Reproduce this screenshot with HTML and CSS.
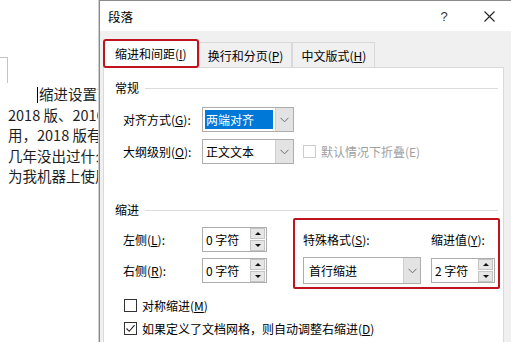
FILE: index.html
```html
<!DOCTYPE html>
<html lang="zh-CN">
<head>
<meta charset="utf-8">
<title>段落</title>
<link rel="stylesheet" href="styles.css">
</head>
<body>
<div class="screen">
  <div class="doc">
    <div class="corner"></div>
    <div class="para">
      <div class="line first"><span class="caret"></span>缩进设置首行缩进的方法</div>
      <div class="line">2018 版、2016 版、2013 版</div>
      <div class="line">用，2018 版有了一些新功能</div>
      <div class="line">几年没出过什么大的更新</div>
      <div class="line">为我机器上使用的是这个</div>
    </div>
  </div>
  <div class="dialog">
    <div class="titlebar">
      <span class="title">段落</span>
      <span class="tbtn help">?</span>
      <span class="tbtn close"><svg width="11" height="11" viewBox="0 0 11 11"><path d="M0.5 0.5 L10.5 10.5 M10.5 0.5 L0.5 10.5" stroke="#222" stroke-width="1.1" fill="none"/></svg></span>
    </div>
    <div class="dbody">
      <div class="tabs">
        <div class="tab active">缩进和间距(<u>I</u>)</div>
        <div class="tab">换行和分页(<u>P</u>)</div>
        <div class="tab">中文版式(<u>H</u>)</div>
      </div>
      <div class="panel">
        <div class="section-head"><span>常规</span><i class="rule"></i></div>
        <div class="frow">
          <span class="flabel">对齐方式(<u>G</u>):</span>
          <div class="select align">
            <span class="val"><span class="hl">两端对齐</span></span>
            <span class="drop"><svg width="9" height="6" viewBox="0 0 9 6"><path d="M0.5 0.8 L4.5 4.8 L8.5 0.8" stroke="#6d6d6d" fill="none"/></svg></span>
          </div>
        </div>
        <div class="frow second">
          <span class="flabel">大纲级别(<u>O</u>):</span>
          <div class="select align">
            <span class="val plain">正文文本</span>
            <span class="drop"><svg width="9" height="6" viewBox="0 0 9 6"><path d="M0.5 0.8 L4.5 4.8 L8.5 0.8" stroke="#6d6d6d" fill="none"/></svg></span>
          </div>
          <span class="check disabled"><span class="box"></span>默认情况下折叠(E)</span>
        </div>

        <div class="section-head indent-head"><span>缩进</span><i class="rule"></i></div>
        <div class="indent">
          <div class="leftcol">
            <div class="frow">
              <span class="flabel">左侧(<u>L</u>):</span>
              <div class="spin">
                <span class="val plain">0 字符</span>
                <span class="arrows"><span class="up"></span><span class="down"></span></span>
              </div>
            </div>
            <div class="frow">
              <span class="flabel">右侧(<u>R</u>):</span>
              <div class="spin">
                <span class="val plain">0 字符</span>
                <span class="arrows"><span class="up"></span><span class="down"></span></span>
              </div>
            </div>
          </div>
          <div class="special">
            <span class="slabel">特殊格式(<u>S</u>):</span>
            <span class="slabel">缩进值(<u>Y</u>):</span>
            <div class="select special-sel">
              <span class="val plain">首行缩进</span>
              <span class="drop"><svg width="9" height="6" viewBox="0 0 9 6"><path d="M0.5 0.8 L4.5 4.8 L8.5 0.8" stroke="#6d6d6d" fill="none"/></svg></span>
            </div>
            <div class="spin small">
              <span class="val plain">2 字符</span>
              <span class="arrows"><span class="up"></span><span class="down"></span></span>
            </div>
          </div>
        </div>
        <div class="checks">
          <span class="check"><span class="box"></span>对称缩进(<u>M</u>)</span>
          <span class="check"><span class="box checked"><svg width="11" height="11" viewBox="0 0 11 11"><path d="M1.5 5.5 L4.2 8.3 L9.6 2.2" stroke="#222" stroke-width="1.1" fill="none"/></svg></span>如果定义了文档网格，则自动调整右缩进(<u>D</u>)</span>
        </div>
      </div>
    </div>
  </div>
</div>
</body>
</html>
```

FILE: styles.css
```css
html, body {
  margin: 0;
  padding: 0;
  background: #ffffff;
}
body {
  width: 511px;
  height: 342px;
  overflow: hidden;
  font-family: "Noto Sans CJK SC", "Noto Sans", sans-serif;
}
.screen {
  display: flex;
  width: 511px;
  height: 342px;
  overflow: hidden;
}

/* document behind the dialog */
.doc {
  width: 99px;
  flex: 0 0 99px;
  overflow: hidden;
  background: #fff;
}
.corner {
  width: 7px;
  height: 25px;
  margin-top: 57px;
  border-top: 1px solid #c4c4c4;
  border-right: 1px solid #c4c4c4;
}
.para {
  margin-top: 1px;
  padding-left: 8px;
  font-size: 14.5px;
  line-height: 20.6px;
  color: #1e1e1e;
}
.line {
  white-space: nowrap;
}
.line.first {
  padding-left: 29px;
}
.caret {
  display: inline-block;
  width: 1px;
  height: 16px;
  margin-right: 1px;
  background: #000;
  vertical-align: -3px;
}

/* dialog */
.dialog {
  flex: 0 0 412px;
  width: 412px;
  border-left: 1px solid #8a8a8a;
  border-top: 1px solid #8a8a8a;
  box-shadow: -1px 0 0 #cfcfcf;
  background: #f0f0f0;
  font-size: 12px;
  color: #000;
}
.titlebar {
  height: 30px;
  background: #ffffff;
  display: flex;
  align-items: center;
  padding-left: 8px;
}
.title {
  flex: 1;
  font-size: 12.5px;
}
.tbtn {
  display: flex;
  align-items: center;
  justify-content: center;
  height: 30px;
}
.help {
  width: 30px;
  font-size: 13px;
  color: #333;
  font-family: "Liberation Sans", sans-serif;
}
.close {
  width: 46px;
  margin-left: 7px;
}
.dbody {
  padding: 8px 0 0 3px;
}
.tabs {
  display: flex;
  align-items: flex-end;
  position: relative;
  z-index: 1;
}
.tab {
  height: 24px;
  padding: 0 8px;
  border: 1px solid #d9d9d9;
  border-bottom: none;
  background: #f0f0f0;
  display: flex;
  align-items: center;
  white-space: nowrap;
}
.tab.active {
  height: 25px;
  margin-bottom: -1px;
  padding: 0 10px;
  background: #ffffff;
  border: 2px solid #c0131f;
  border-radius: 3px;
}
.panel {
  width: 383px;
  height: 290px;
  background: #ffffff;
  border: 1px solid #d9d9d9;
  padding: 12px 5px 0 11px;
}
.section-head {
  display: flex;
  align-items: center;
  height: 16px;
  line-height: 16px;
}
.section-head .rule {
  flex: 1;
  height: 1px;
  background: #dcdcdc;
  margin-left: 6px;
}
.indent-head {
  margin-top: 38px;
}
.frow {
  display: flex;
  align-items: center;
  margin-left: 8px;
  margin-top: 11px;
  height: 25px;
}
.frow.second {
  margin-top: 7px;
}
.flabel {
  width: 79px;
  flex: 0 0 79px;
  white-space: nowrap;
}
u {
  text-decoration: underline;
  text-underline-offset: 1px;
}

.select {
  box-sizing: border-box;
  height: 25px;
  border: 1px solid #adadad;
  display: flex;
  background: #fff;
}
.select.align {
  width: 92px;
}
.val {
  flex: 1;
  display: flex;
  align-items: center;
  padding: 2px;
  white-space: nowrap;
}
.val.plain {
  padding-left: 3px;
}
.hl {
  display: flex;
  align-items: center;
  height: 100%;
  width: 100%;
  background: #0078d7;
  color: #fff;
  padding-left: 1px;
}
.drop {
  width: 17px;
  background: #e3e3e3;
  border-left: 1px solid #d0d0d0;
  display: flex;
  align-items: center;
  justify-content: center;
}
.check {
  display: flex;
  align-items: center;
  white-space: nowrap;
}
.check .box {
  width: 11px;
  height: 11px;
  border: 1px solid #333;
  background: #fff;
  margin-right: 5px;
  display: flex;
  align-items: center;
  justify-content: center;
}
.check.disabled {
  margin-left: 9px;
  color: #a0a0a0;
}
.check.disabled .box {
  border-color: #cccccc;
}

.indent {
  display: flex;
  align-items: flex-start;
}
.leftcol {
  width: 178px;
  flex: 0 0 178px;
  padding-top: 9px;
}
.leftcol .frow {
  margin-top: 0;
  margin-bottom: 6px;
  margin-left: 8px;
}
.spin {
  box-sizing: border-box;
  width: 65px;
  height: 25px;
  border: 1px solid #adadad;
  display: flex;
  background: #fff;
}
.spin.small {
  width: 64px;
}
.arrows {
  width: 15px;
  display: flex;
  flex-direction: column;
  justify-content: center;
  gap: 1px;
  margin-right: 1px;
}
.arrows span {
  height: 9px;
  background: #e6e6e6;
  border: 1px solid #c4c4c4;
  display: flex;
  align-items: center;
  justify-content: center;
}
.arrows .up::before {
  content: "";
  border-left: 3px solid transparent;
  border-right: 3px solid transparent;
  border-bottom: 3px solid #111;
}
.arrows .down::before {
  content: "";
  border-left: 3px solid transparent;
  border-right: 3px solid transparent;
  border-top: 3px solid #111;
}

.special {
  box-sizing: border-box;
  width: 207px;
  height: 71px;
  border: 2px solid #c0131f;
  border-radius: 2px;
  padding: 12px 3px 3px 8px;
  display: grid;
  grid-template-columns: 118px 64px;
  grid-template-rows: 16px 27px;
  column-gap: 10px;
  row-gap: 9px;
  align-items: start;
}
.slabel {
  line-height: 16px;
  white-space: nowrap;
}
.special-sel {
  width: 118px;
  height: 27px;
}
.special-sel .val.plain {
  padding-left: 5px;
}
.special-sel .drop {
  width: 16px;
}
.special .spin {
  margin-top: 1px;
}

.checks {
  margin-left: 9px;
  margin-top: 8px;
  display: flex;
  flex-direction: column;
  gap: 7px;
}
.checks .check {
  height: 16px;
}
.box.checked {
  border-color: #333;
}
```
